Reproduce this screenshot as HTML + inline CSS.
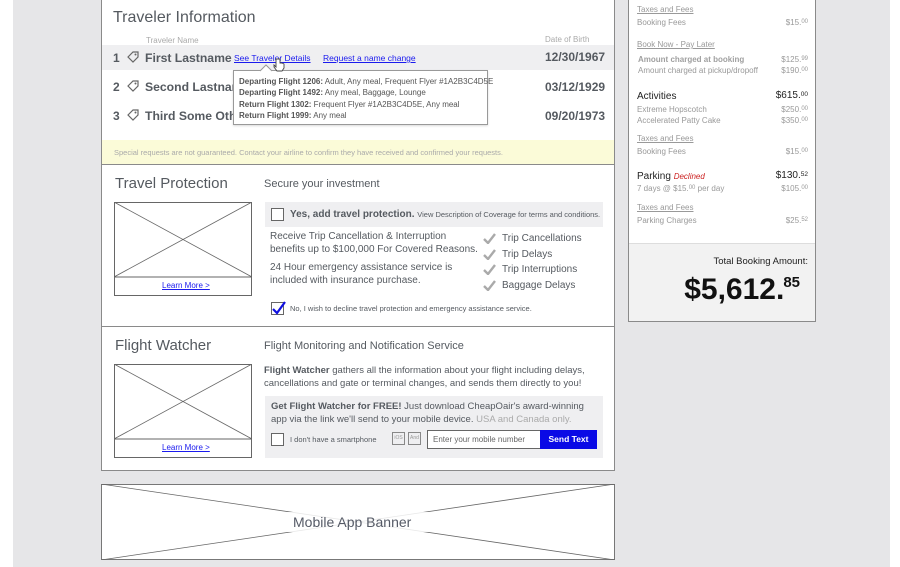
<!DOCTYPE html>
<html><head><meta charset="utf-8">
<style>
*{margin:0;padding:0;box-sizing:border-box}
body{width:900px;height:567px;overflow:hidden;background:#fff;font-family:"Liberation Sans",sans-serif;color:#555a60;position:relative}
.bg{position:absolute;left:13px;top:0;width:877px;height:567px;background:#e6e6e8}
.a{position:absolute}
.panel{position:absolute;background:#fff;border:1px solid #8a8a8a}
.lnk{color:#1a1aee;text-decoration:underline}
sup{font-size:6px;vertical-align:top;position:relative;top:1px}
.u{text-decoration:underline}
.chk{position:absolute;width:13px;height:13px;border:1px solid #666;background:#fff}
.ck{position:absolute;left:0}
</style></head><body>
<div class="bg"></div>

<div class="panel" style="left:101px;top:-1px;width:514px;height:472px;border-top:none"></div>
<div class="a" style="left:113px;top:9px;font-size:16px;color:#555a60">Traveler Information</div>
<div class="a" style="left:146px;top:36px;font-size:8px;color:#aaa">Traveler Name</div>
<div class="a" style="left:545px;top:35px;font-size:8px;color:#aaa">Date of Birth</div>
<div class="a" style="left:102px;top:45px;width:512px;height:25px;background:#efeff1"></div>

<div class="a" style="left:113px;top:51px;font-size:12px;font-weight:bold">1</div>
<div class="a" style="left:113px;top:80px;font-size:12px;font-weight:bold">2</div>
<div class="a" style="left:113px;top:109px;font-size:12px;font-weight:bold">3</div>
<svg class="a" style="left:126px;top:50px" width="14" height="14" viewBox="0 0 14 14"><path d="M2 7 L7 2 L12 2 L12 7 L7 12 Z" fill="none" stroke="#666" stroke-width="1.2"/><circle cx="9.5" cy="4.5" r="1" fill="#666"/></svg>
<svg class="a" style="left:126px;top:79px" width="14" height="14" viewBox="0 0 14 14"><path d="M2 7 L7 2 L12 2 L12 7 L7 12 Z" fill="none" stroke="#666" stroke-width="1.2"/><circle cx="9.5" cy="4.5" r="1" fill="#666"/></svg>
<svg class="a" style="left:126px;top:108px" width="14" height="14" viewBox="0 0 14 14"><path d="M2 7 L7 2 L12 2 L12 7 L7 12 Z" fill="none" stroke="#666" stroke-width="1.2"/><circle cx="9.5" cy="4.5" r="1" fill="#666"/></svg>
<div class="a" style="left:145px;top:51px;font-size:12.2px;font-weight:bold">First Lastname</div>
<div class="a" style="left:145px;top:80px;font-size:12.2px;font-weight:bold;width:90px;overflow:hidden;white-space:nowrap">Second Lastname</div>
<div class="a" style="left:145px;top:109px;font-size:12.2px;font-weight:bold;width:90px;overflow:hidden;white-space:nowrap">Third Some Other</div>
<div class="a lnk" style="left:234px;top:53px;font-size:8.5px">See Traveler Details</div>
<div class="a lnk" style="left:323px;top:53px;font-size:8.5px">Request a name change</div>
<div class="a" style="left:545px;top:50px;font-size:12px;font-weight:bold">12/30/1967</div>
<div class="a" style="left:545px;top:80px;font-size:12px;font-weight:bold">03/12/1929</div>
<div class="a" style="left:545px;top:109px;font-size:12px;font-weight:bold">09/20/1973</div>

<div class="a" style="left:233px;top:70px;width:255px;height:55px;background:#fff;border:1px solid #999;box-shadow:0 1px 2px rgba(0,0,0,.15)"></div>
<svg class="a" style="left:160px;top:64px" width="200" height="8"><path d="M100 7 L106 1 L112 7" fill="#fff" stroke="#999"/></svg>
<div class="a" style="left:239px;top:76px;font-size:8px;line-height:11.3px;color:#555">
<b>Departing Flight 1206:</b> Adult, Any meal, Frequent Flyer #1A2B3C4D5E<br>
<b>Departing Flight 1492:</b> Any meal, Baggage, Lounge<br>
<b>Return Flight 1302:</b> Frequent Flyer #1A2B3C4D5E, Any meal<br>
<b>Return Flight 1999:</b> Any meal</div>
<svg class="a" style="left:273px;top:58px" width="12" height="14" viewBox="0 0 12 14"><path d="M3 1 v8 l-2 -2 v2 l3 4 h5 l2-3 v-4 l-2-1 l-2 0 v-4 z" fill="#fff" stroke="#444" stroke-width="0.9"/></svg>

<div class="a" style="left:102px;top:140px;width:512px;height:25px;background:#fbfbd8;border-bottom:1px solid #8a8a8a"></div>
<div class="a" style="left:114px;top:148px;font-size:7.5px;color:#aaa">Special requests are not guaranteed. Contact your airline to confirm they have received and confirmed your requests.</div>

<div class="a" style="left:115px;top:175px;font-size:15px">Travel Protection</div>
<div class="a" style="left:264px;top:178px;font-size:11px">Secure your investment</div>
<svg class="a" style="left:114px;top:202px" width="138" height="94"><rect x="0.5" y="0.5" width="137" height="93" fill="#fff" stroke="#666"/><line x1="0" y1="75" x2="138" y2="75" stroke="#666"/><path d="M0 0 L138 75 M138 0 L0 75" stroke="#666" stroke-width="0.8"/></svg>
<div class="a lnk" style="left:162px;top:281px;font-size:8px">Learn More &gt;</div>
<div class="a" style="left:265px;top:202px;width:338px;height:25px;background:#efeff1"></div>
<div class="chk" style="left:271px;top:208px"></div>
<div class="a" style="left:290px;top:209px;font-size:10px"><b>Yes, add travel protection.</b> <span style="font-size:7.5px">View Description of Coverage for terms and conditions.</span></div>
<div class="a" style="left:270px;top:231px;font-size:10px;line-height:12.5px">Receive Trip Cancellation &amp; Interruption<br>benefits up to $100,000 For Covered Reasons.</div>
<div class="a" style="left:270px;top:262px;font-size:10px;line-height:12.5px">24 Hour emergency assistance service is<br>included with insurance purchase.</div>
<div class="a" style="left:483px;top:231px;width:120px;height:64px">
<svg class="ck" style="top:2px" width="13" height="11"><path d="M1 6 L5 10 L12 1" fill="none" stroke="#aaa" stroke-width="2.4"/></svg>
<svg class="ck" style="top:18px" width="13" height="11"><path d="M1 6 L5 10 L12 1" fill="none" stroke="#aaa" stroke-width="2.4"/></svg>
<svg class="ck" style="top:33px" width="13" height="11"><path d="M1 6 L5 10 L12 1" fill="none" stroke="#aaa" stroke-width="2.4"/></svg>
<svg class="ck" style="top:49px" width="13" height="11"><path d="M1 6 L5 10 L12 1" fill="none" stroke="#aaa" stroke-width="2.4"/></svg>
<div class="a" style="left:19px;top:0;font-size:10px;line-height:15.6px;white-space:nowrap">Trip Cancellations<br>Trip Delays<br>Trip Interruptions<br>Baggage Delays</div>
</div>
<div class="chk" style="left:271px;top:302px"></div>
<svg class="a" style="left:271px;top:300px" width="16" height="16"><path d="M2 9 L6 13 L14 2" fill="none" stroke="#1010e0" stroke-width="2.2"/></svg>
<div class="a" style="left:290px;top:304px;font-size:7.5px">No, I wish to decline travel protection and emergency assistance service.</div>
<div class="a" style="left:102px;top:326px;width:512px;height:1px;background:#8a8a8a"></div>

<div class="a" style="left:115px;top:337px;font-size:15px">Flight Watcher</div>
<div class="a" style="left:264px;top:340px;font-size:11px">Flight Monitoring and Notification Service</div>
<svg class="a" style="left:114px;top:364px" width="138" height="94"><rect x="0.5" y="0.5" width="137" height="93" fill="#fff" stroke="#666"/><line x1="0" y1="75" x2="138" y2="75" stroke="#666"/><path d="M0 0 L138 75 M138 0 L0 75" stroke="#666" stroke-width="0.8"/></svg>
<div class="a lnk" style="left:162px;top:443px;font-size:8px">Learn More &gt;</div>
<div class="a" style="left:264px;top:365px;font-size:9.5px;line-height:12.6px"><b>Flight Watcher</b> gathers all the information about your flight including delays,<br>cancellations and gate or terminal changes, and sends them directly to you!</div>
<div class="a" style="left:265px;top:396px;width:338px;height:62px;background:#efeff1"></div>
<div class="a" style="left:271px;top:401px;font-size:9.5px;line-height:12.6px"><b>Get Flight Watcher for FREE!</b> Just download CheapOair's award-winning<br>app via the link we'll send to your mobile device. <span style="color:#aaa">USA and Canada only.</span></div>
<div class="chk" style="left:271px;top:433px"></div>
<div class="a" style="left:290px;top:435px;font-size:7.5px">I don't have a smartphone</div>
<div class="a" style="left:392px;top:432px;width:13px;height:13px;border:1px solid #888;font-size:5px;color:#999;text-align:center;line-height:11px">iOS</div>
<div class="a" style="left:408px;top:432px;width:13px;height:13px;border:1px solid #888;font-size:5px;color:#999;text-align:center;line-height:11px">And</div>
<div class="a" style="left:427px;top:430px;width:114px;height:19px;background:#fff;border:1px solid #666;font-size:8px;padding:4px 5px;color:#666">Enter your mobile number</div>
<div class="a" style="left:540px;top:430px;width:57px;height:19px;background:#0a0ae6;color:#fff;font-size:8.5px;font-weight:bold;text-align:center;line-height:19px">Send Text</div>

<svg class="a" style="left:101px;top:484px" width="514" height="76"><rect x="0.5" y="0.5" width="513" height="75" fill="#fff" stroke="#777"/><path d="M0 0 L514 76 M514 0 L0 76" stroke="#666" stroke-width="0.8"/><rect x="185" y="28" width="144" height="20" fill="#fff" opacity=".85"/></svg>
<div class="a" style="left:293px;top:514px;font-size:14px;color:#555a66">Mobile App Banner</div>

<div class="panel" style="left:628px;top:-1px;width:188px;height:323px;border-top:none"></div>
<div class="a" style="left:629px;top:243px;width:186px;height:78px;background:#f2f2f2;border-top:1px solid #ddd"></div>
<div style="position:absolute;left:637px;top:0;width:171px;font-size:8px;color:#999">
<div class="a u" style="top:5px;left:0">Taxes and Fees</div>
<div class="a" style="top:18px;left:0">Booking Fees</div><div class="a" style="top:18px;right:0">$15.<sup>00</sup></div>
<div class="a u" style="top:40px;left:0">Book Now - Pay Later</div>
<div class="a" style="top:55px;left:1px;font-weight:bold;color:#a0a0a0">Amount charged at booking</div><div class="a" style="top:55px;right:0">$125.<sup>99</sup></div>
<div class="a" style="top:66px;left:1px">Amount charged at pickup/dropoff</div><div class="a" style="top:66px;right:0">$190.<sup>00</sup></div>
<div class="a" style="top:91px;left:0;font-size:10px;color:#222">Activities</div><div class="a" style="top:90px;right:0;font-size:10px;color:#222">$615.<sup style="font-size:6.5px">00</sup></div>
<div class="a" style="top:105px;left:0">Extreme Hopscotch</div><div class="a" style="top:105px;right:0">$250.<sup>00</sup></div>
<div class="a" style="top:116px;left:0">Accelerated Patty Cake</div><div class="a" style="top:116px;right:0">$350.<sup>00</sup></div>
<div class="a u" style="top:134px;left:0">Taxes and Fees</div>
<div class="a" style="top:147px;left:0">Booking Fees</div><div class="a" style="top:147px;right:0">$15.<sup>00</sup></div>
<div class="a" style="top:171px;left:0;font-size:10px;color:#222">Parking <i style="color:#c22;font-size:8px">Declined</i></div><div class="a" style="top:170px;right:0;font-size:10px;color:#222">$130.<sup style="font-size:6.5px">52</sup></div>
<div class="a" style="top:184px;left:0">7 days @ $15.<sup>00</sup> per day</div><div class="a" style="top:184px;right:0">$105.<sup>00</sup></div>
<div class="a u" style="top:203px;left:0">Taxes and Fees</div>
<div class="a" style="top:216px;left:0">Parking Charges</div><div class="a" style="top:216px;right:0">$25.<sup>52</sup></div>
<div class="a" style="top:256px;right:0;font-size:9.5px;color:#222">Total Booking Amount:</div>
<div class="a" style="top:273px;right:8px;font-size:30px;font-weight:bold;color:#111">$5,612.<sup style="font-size:15px;top:1px;margin-left:-1px">85</sup></div>
</div>
</body></html>
